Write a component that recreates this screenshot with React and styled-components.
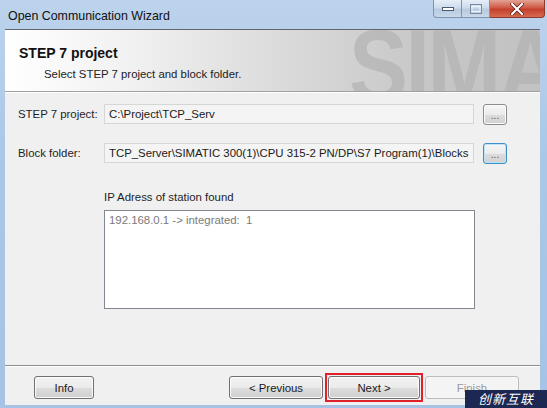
import React from "react";
import styled, { createGlobalStyle } from "styled-components";

const GlobalStyle = createGlobalStyle`
  html, body {
    margin: 0;
    padding: 0;
    overflow: hidden;
    background: #ffffff;
  }
`;

const Window = styled.div`
  position: relative;
  width: 547px;
  height: 408px;
  display: flex;
  flex-direction: column;
  background: linear-gradient(180deg, #bcd3ec 0%, #aac7e8 40%, #a6c3e6 100%);
  font-family: "Liberation Sans", Arial, sans-serif;
  font-size: 11.4px;
  color: #1e1e1e;
  overflow: hidden;
`;

const TitleBar = styled.div`
  height: 28px;
  display: flex;
  align-items: flex-start;
  justify-content: space-between;
  padding-left: 8px;
`;

const Title = styled.div`
  font-size: 12.4px;
  line-height: 13px;
  padding-top: 10px;
  color: #101010;
`;

const Controls = styled.div`
  display: flex;
  margin-right: 2px;
`;

const CtrlButton = styled.div`
  width: ${p => p.$w}px;
  height: 18px;
  box-sizing: border-box;
  display: flex;
  align-items: center;
  justify-content: center;
  border: 1px solid ${p => (p.$close ? "#8a3a2e" : "#7e93ad")};
  border-top: none;
  border-left-width: ${p => (p.$first ? 1 : 0)}px;
  border-radius: ${p => (p.$first ? "0 0 0 4px" : p.$close ? "0 0 4px 0" : "0")};
  background: ${p =>
    p.$close
      ? "linear-gradient(180deg, #e3a395 0%, #cf5a45 45%, #c3402c 55%, #d66a4f 100%)"
      : "linear-gradient(180deg, #e6eef7 0%, #cfdced 45%, #b9cadf 55%, #c9d8ea 100%)"};
`;

const Client = styled.div`
  flex: 1;
  display: flex;
  flex-direction: column;
  margin: 1px 7px 3px 5px;
  background: #f0f0f0;
`;

const Header = styled.div`
  position: relative;
  height: 61px;
  border-top: 1px solid #5f6670;
  border-bottom: 1px solid #a0a0a0;
  box-shadow: 0 1px 0 #ffffff;
  background: linear-gradient(90deg, #ffffff 0%, #f0f0f0 25%, #d8d8d8 55%, #c6c6c6 80%, #c2c2c2 100%);
  overflow: hidden;
`;

const HeaderMark = styled.div`
  position: absolute;
  left: 344px;
  top: -16px;
  font-family: "Liberation Sans", Arial, sans-serif;
  font-weight: bold;
  font-size: 104px;
  line-height: 104px;
  letter-spacing: -3px;
  color: #b3b3b3;
  opacity: 0.7;
  transform: scaleX(0.85);
  transform-origin: left top;
`;

const HeaderTitle = styled.div`
  position: relative;
  margin: 15px 0 0 14px;
  font-weight: bold;
  font-size: 14px;
  line-height: 16px;
  color: #111;
`;

const HeaderSub = styled.div`
  position: relative;
  margin: 6px 0 0 39px;
  line-height: 14px;
  color: #222;
`;

const Form = styled.div`
  display: flex;
  flex-direction: column;
  gap: 19px;
  padding: 12px 0 0 13px;
`;

const Row = styled.div`
  display: flex;
  align-items: center;
  height: 20px;
`;

const Label = styled.div`
  width: 86px;
  white-space: nowrap;
`;

const Field = styled.div`
  width: 370px;
  height: 20px;
  box-sizing: border-box;
  border: 1px solid #d6d6d6;
  background: #f4f4f4;
  padding: 0 4px;
  line-height: 18px;
  white-space: nowrap;
  overflow: hidden;
  color: #1a1a1a;
`;

const Browse = styled.div`
  width: 24px;
  height: 21px;
  margin-left: 9px;
  box-sizing: border-box;
  border-radius: 3px;
  border: 1px solid ${p => (p.$focus ? "#3c8fc9" : "#8c8c8c")};
  box-shadow: ${p => (p.$focus ? "inset 0 0 0 1px #bfe2f7" : "inset 0 0 0 1px #fafafa")};
  background: linear-gradient(180deg, #f6f6f6 0%, #ebebeb 50%, #dcdcdc 51%, #d2d2d2 100%);
  display: flex;
  align-items: center;
  justify-content: center;
  font-size: 10px;
  line-height: 10px;
  padding-top: 3px;
  color: #555;
`;

const Found = styled.div`
  display: flex;
  flex-direction: column;
  padding: 27px 0 0 99px;
`;

const FoundLabel = styled.div`
  line-height: 14px;
  margin-bottom: 6px;
`;

const ListBox = styled.div`
  width: 371px;
  height: 99px;
  box-sizing: border-box;
  border: 1px solid #828790;
  background: #ffffff;
  padding: 2px 4px;
  line-height: 14px;
  color: #7a7a7a;
  white-space: pre;
`;

const Spacer = styled.div`
  flex: 1;
`;

const Separator = styled.div`
  height: 1px;
  background: #8e8e8e;
  border-bottom: 1px solid #ffffff;
`;

const Footer = styled.div`
  display: flex;
  align-items: center;
  height: 23px;
  padding: 9px 0 6px 29px;
`;

const Button = styled.div`
  width: ${p => p.$w}px;
  height: 23px;
  box-sizing: border-box;
  border-radius: 3px;
  border: 1px solid ${p => (p.$disabled ? "#bcbcbc" : "#707070")};
  box-shadow: inset 0 0 0 1px ${p => (p.$disabled ? "#f6f6f6" : "#fbfbfb")};
  background: ${p =>
    p.$disabled
      ? "#f4f4f4"
      : "linear-gradient(180deg, #f2f2f2 0%, #ebebeb 50%, #dddddd 51%, #cfcfcf 100%)"};
  color: ${p => (p.$disabled ? "#9a9a9a" : "#1a1a1a")};
  display: flex;
  align-items: center;
  justify-content: center;
  margin-left: ${p => p.$ml || 0}px;
`;

const Highlight = styled.div`
  border: 2px solid #e0202c;
  padding: 1px;
  margin: 0 2px;
`;

const Badge = styled.div`
  position: absolute;
  right: 0;
  bottom: 0;
  width: 82px;
  height: 18px;
  background: #1c2852;
  color: #ffffff;
  font-family: "Noto Sans CJK SC", sans-serif;
  font-style: italic;
  font-size: 13px;
  line-height: 18px;
  letter-spacing: 1px;
  text-align: center;
`;

const Minimize = () => (
  <svg width="12" height="6" viewBox="0 0 12 6">
    <rect x="0.5" y="1.5" width="11" height="3" fill="#ffffff" stroke="#4a5a70" />
  </svg>
);

const Maximize = () => (
  <svg width="12" height="10" viewBox="0 0 12 10">
    <rect x="0.5" y="0.5" width="11" height="9" fill="none" stroke="#7889a0" />
    <rect x="2" y="2.5" width="8" height="5" fill="none" stroke="#f2f6fb" />
  </svg>
);

const Close = () => (
  <svg width="14" height="12" viewBox="0 0 14 12">
    <path d="M2 1 L12 11 M12 1 L2 11" stroke="#5a1b12" strokeWidth="3.6" strokeLinecap="round" />
    <path d="M2 1 L12 11 M12 1 L2 11" stroke="#ffffff" strokeWidth="2.2" strokeLinecap="round" />
  </svg>
);

export default function App() {
  return (
    <>
      <GlobalStyle />
      <Window>
        <TitleBar>
          <Title>Open Communication Wizard</Title>
          <Controls>
            <CtrlButton $w={29} $first>
              <Minimize />
            </CtrlButton>
            <CtrlButton $w={28}>
              <Maximize />
            </CtrlButton>
            <CtrlButton $w={55} $close>
              <Close />
            </CtrlButton>
          </Controls>
        </TitleBar>
        <Client>
          <Header>
            <HeaderMark>SIMATIC</HeaderMark>
            <HeaderTitle>STEP 7 project</HeaderTitle>
            <HeaderSub>Select STEP 7 project and block folder.</HeaderSub>
          </Header>
          <Form>
            <Row>
              <Label>STEP 7 project:</Label>
              <Field>C:\Project\TCP_Serv</Field>
              <Browse>...</Browse>
            </Row>
            <Row>
              <Label>Block folder:</Label>
              <Field>TCP_Server\SIMATIC 300(1)\CPU 315-2 PN/DP\S7 Program(1)\Blocks</Field>
              <Browse $focus>...</Browse>
            </Row>
          </Form>
          <Found>
            <FoundLabel>IP Adress of station found</FoundLabel>
            <ListBox>{"192.168.0.1 -> integrated:  1"}</ListBox>
          </Found>
          <Spacer />
          <Separator />
          <Footer>
            <Button $w={60}>Info</Button>
            <Button $w={94} $ml={135}>&lt; Previous</Button>
            <Highlight>
              <Button $w={92}>Next &gt;</Button>
            </Highlight>
            <Button $w={94} $disabled>Finish</Button>
          </Footer>
        </Client>
        <Badge>创新互联</Badge>
      </Window>
    </>
  );
}
